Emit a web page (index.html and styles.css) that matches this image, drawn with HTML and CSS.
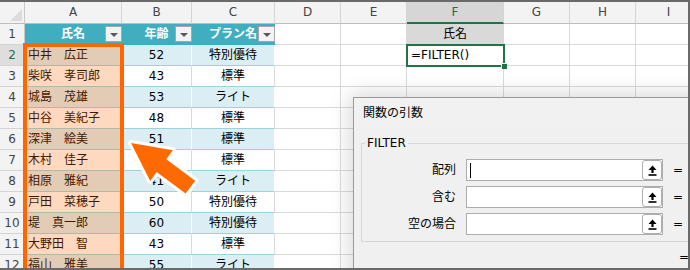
FILE: index.html
```html
<!DOCTYPE html>
<html lang="ja">
<head>
<meta charset="utf-8">
<link rel="stylesheet" href="styles.css">
</head>
<body>
<div class="frame">
  <div class="sheet">
    <div class="corner"><span class="tri"></span></div>
    <div class="ch">A</div><div class="ch">B</div><div class="ch">C</div><div class="ch">D</div><div class="ch">E</div><div class="ch sel">F</div><div class="ch">G</div><div class="ch">H</div><div class="ch">I</div>

    <div class="rh">1</div>
    <div class="c th">氏名<span class="fbtn"></span></div>
    <div class="c th">年齢<span class="fbtn"></span></div>
    <div class="c th">プラン名<span class="fbtn"></span></div>
    <div class="c"></div><div class="c"></div>
    <div class="c gray ctr">氏名</div>
    <div class="c"></div><div class="c"></div><div class="c"></div>

    <div class="rh act">2</div>
    <div class="c tb">中井　広正</div><div class="c tb ctr">52</div><div class="c tb ctr">特別優待</div>
    <div class="c"></div><div class="c"></div>
    <div class="c active">=FILTER()<span class="handle"></span></div>
    <div class="c"></div><div class="c"></div><div class="c"></div>

    <div class="rh">3</div>
    <div class="c tw">柴咲　孝司郎</div><div class="c tw ctr">43</div><div class="c tw ctr">標準</div>
    <div class="c"></div><div class="c"></div><div class="c"></div><div class="c"></div><div class="c"></div><div class="c"></div>

    <div class="rh">4</div>
    <div class="c tb">城島　茂雄</div><div class="c tb ctr">53</div><div class="c tb ctr">ライト</div>
    <div class="c"></div><div class="c"></div><div class="c"></div><div class="c"></div><div class="c"></div><div class="c"></div>

    <div class="rh">5</div>
    <div class="c tw">中谷　美紀子</div><div class="c tw ctr">48</div><div class="c tw ctr">標準</div>
    <div class="c"></div><div class="c"></div><div class="c"></div><div class="c"></div><div class="c"></div><div class="c"></div>

    <div class="rh">6</div>
    <div class="c tb">深津　絵美</div><div class="c tb ctr">51</div><div class="c tb ctr">標準</div>
    <div class="c"></div><div class="c"></div><div class="c"></div><div class="c"></div><div class="c"></div><div class="c"></div>

    <div class="rh">7</div>
    <div class="c tw">木村　佳子</div><div class="c tw ctr">35</div><div class="c tw ctr">標準</div>
    <div class="c"></div><div class="c"></div><div class="c"></div><div class="c"></div><div class="c"></div><div class="c"></div>

    <div class="rh">8</div>
    <div class="c tb">相原　雅紀</div><div class="c tb ctr">41</div><div class="c tb ctr">ライト</div>
    <div class="c"></div><div class="c"></div><div class="c"></div><div class="c"></div><div class="c"></div><div class="c"></div>

    <div class="rh">9</div>
    <div class="c tw">戸田　菜穂子</div><div class="c tw ctr">50</div><div class="c tw ctr">特別優待</div>
    <div class="c"></div><div class="c"></div><div class="c"></div><div class="c"></div><div class="c"></div><div class="c"></div>

    <div class="rh">10</div>
    <div class="c tb">堤　真一郎</div><div class="c tb ctr">60</div><div class="c tb ctr">特別優待</div>
    <div class="c"></div><div class="c"></div><div class="c"></div><div class="c"></div><div class="c"></div><div class="c"></div>

    <div class="rh">11</div>
    <div class="c tw">大野田　智</div><div class="c tw ctr">43</div><div class="c tw ctr">標準</div>
    <div class="c"></div><div class="c"></div><div class="c"></div><div class="c"></div><div class="c"></div><div class="c"></div>

    <div class="rh">12</div>
    <div class="c tb">福山　雅美</div><div class="c tb ctr">55</div><div class="c tb ctr">ライト</div>
    <div class="c"></div><div class="c"></div><div class="c"></div><div class="c"></div><div class="c"></div><div class="c"></div>
  </div>

  <div class="highlight"></div>

  <svg class="arrow" width="100" height="80" viewBox="120 128 100 80">
    <polygon points="131,143 172.8,150.3 166.3,159.2 195.2,180.7 185.6,193.5 156.7,172 150.2,180.9" fill="#ff6a00" stroke="#ffffff" stroke-width="6" stroke-linejoin="round" paint-order="stroke fill"/>
  </svg>

  <div class="dialog">
    <div class="dlg-title">関数の引数</div>
    <div class="dlg-body">
      <div class="group">
        <div class="group-title">FILTER</div>
        <div class="args">
          <div class="lbl">配列</div>
          <div class="field"><span class="caret"></span><span class="pick"><svg width="9" height="11" viewBox="0 0 9 11"><path d="M4.5 0.5 L8.5 5 L5.6 5 L5.6 8 L3.4 8 L3.4 5 L0.5 5 Z" fill="#000"/><rect x="0.5" y="9.2" width="8" height="1.6" fill="#000"/></svg></span></div>
          <div class="eq">=</div>

          <div class="lbl">含む</div>
          <div class="field"><span></span><span class="pick"><svg width="9" height="11" viewBox="0 0 9 11"><path d="M4.5 0.5 L8.5 5 L5.6 5 L5.6 8 L3.4 8 L3.4 5 L0.5 5 Z" fill="#000"/><rect x="0.5" y="9.2" width="8" height="1.6" fill="#000"/></svg></span></div>
          <div class="eq">=</div>

          <div class="lbl">空の場合</div>
          <div class="field"><span></span><span class="pick"><svg width="9" height="11" viewBox="0 0 9 11"><path d="M4.5 0.5 L8.5 5 L5.6 5 L5.6 8 L3.4 8 L3.4 5 L0.5 5 Z" fill="#000"/><rect x="0.5" y="9.2" width="8" height="1.6" fill="#000"/></svg></span></div>
          <div class="eq">=</div>
        </div>
      </div>
      <div class="result"><span class="eq">=</span></div>
    </div>
  </div>
</div>
</body>
</html>
```

FILE: styles.css
```css
html, body {
  margin: 0;
  padding: 0;
  background: #fff;
}

.frame {
  position: relative;
  width: 690px;
  height: 270px;
  box-sizing: border-box;
  border-top: 2px solid #6a6a6a;
  border-right: 2px solid #6a6a6a;
  border-bottom: 2px solid #6a6a6a;
  overflow: hidden;
  background: #fff;
}

.sheet {
  display: grid;
  grid-template-columns: 25px 97px 70px 83px 66px 66px 97px 66px 66px 66px;
  grid-template-rows: 22px;
  grid-auto-rows: 21px;
  font-family: "DejaVu Sans", "Noto Sans CJK JP", sans-serif;
  font-size: 12px;
  color: #000;
}

.sheet > div {
  box-sizing: border-box;
  border-right: 1px solid #dadada;
  border-bottom: 1px solid #dadada;
  line-height: 20px;
  white-space: nowrap;
  overflow: hidden;
  padding: 0 3px;
}

.sheet > .corner {
  background: #f3f3f3;
  border-right-color: #c9c9c9;
  border-bottom-color: #bdbdbd;
  display: flex;
  align-items: flex-end;
  justify-content: flex-end;
  padding: 0 2px 2px 0;
}

.tri {
  width: 0;
  height: 0;
  border-left: 12px solid transparent;
  border-bottom: 12px solid #dcdcdc;
}

.sheet > .ch {
  background: #f3f3f3;
  color: #444;
  text-align: center;
  border-right-color: #d4d4d4;
  border-bottom-color: #bdbdbd;
  line-height: 21px;
}

.sheet > .ch.sel {
  background: #d6d6d6;
  color: #217346;
  border-bottom: 2px solid #217346;
}

.sheet > .rh {
  background: #f3f3f3;
  color: #444;
  text-align: center;
  padding: 0;
  border-right-color: #c9c9c9;
  border-bottom-color: #d4d4d4;
}

.sheet > .rh.act {
  background: #dedede;
  color: #217346;
}

.sheet > .th {
  position: relative;
  background: #41aebf;
  color: #fff;
  font-weight: bold;
  text-align: center;
  border-right-color: #41aebf;
  border-bottom-color: #41aebf;
  overflow: visible;
}

.fbtn {
  position: absolute;
  right: -1px;
  top: 2px;
  width: 17px;
  height: 16px;
  box-sizing: border-box;
  border: 1px solid #a6a6a6;
  background: #f3f3f3;
  display: flex;
  align-items: center;
  justify-content: center;
}

.fbtn::after {
  content: "";
  width: 0;
  height: 0;
  border-left: 4px solid transparent;
  border-right: 4px solid transparent;
  border-top: 4px solid #5a5a5a;
  margin-top: 1px;
}

.sheet > .tb {
  background: #daeef3;
  border-right-color: #ffffff;
  border-bottom-color: #9ad2de;
}

.sheet > .tw {
  background: #ffffff;
  border-bottom-color: #9ad2de;
}

.sheet > .ctr {
  text-align: center;
}

.sheet > .gray {
  background: #d9d9d9;
}

.sheet > .active {
  position: relative;
  overflow: visible;
  outline: 2px solid #217346;
  outline-offset: -1px;
  z-index: 2;
  padding-left: 4px;
}

.handle {
  position: absolute;
  right: -4px;
  bottom: -4px;
  width: 5px;
  height: 5px;
  background: #217346;
  border-left: 1px solid #fff;
  border-top: 1px solid #fff;
}

.highlight {
  position: absolute;
  left: 23px;
  top: 41px;
  width: 101px;
  height: 260px;
  box-sizing: border-box;
  border: 4px solid #ff6600;
  background: rgba(255, 102, 0, 0.25);
  z-index: 3;
}

.arrow {
  position: absolute;
  left: 120px;
  top: 126px;
  z-index: 4;
}

.dialog {
  position: absolute;
  left: 353px;
  top: 95px;
  width: 400px;
  height: 220px;
  box-sizing: border-box;
  border: 1px solid #9a9a9a;
  background: #f0f0f0;
  box-shadow: 0 0 20px 3px rgba(0, 0, 0, 0.16);
  z-index: 5;
  font-family: "DejaVu Sans", "Noto Sans CJK JP", sans-serif;
  font-size: 12px;
  color: #000;
}

.dlg-title {
  height: 30px;
  line-height: 30px;
  padding-left: 9px;
  background: #f1f1f1;
}

.dlg-body {
  padding: 15px 6px 0 7px;
}

.group {
  border: 1px solid #d8d8d8;
  padding: 0 0 6px 0;
}

.group-title {
  width: fit-content;
  margin: -9px 0 0 3px;
  padding: 0 2px;
  line-height: 16px;
  background: #f0f0f0;
}

.args {
  margin-top: 8px;
  display: grid;
  grid-template-columns: 94px 197px 20px;
  grid-auto-rows: 22px;
  column-gap: 10px;
  row-gap: 5px;
  align-items: center;
}

.args .lbl {
  text-align: right;
  line-height: 22px;
}

.field {
  height: 22px;
  box-sizing: border-box;
  border: 1px solid #adadad;
  background: #fff;
  display: flex;
  align-items: center;
  justify-content: space-between;
}

.caret {
  width: 1px;
  height: 15px;
  background: #000;
  margin-left: 3px;
}

.pick {
  width: 20px;
  height: 20px;
  box-sizing: border-box;
  border: 1px solid #adadad;
  border-radius: 3px;
  background: #fff;
  display: flex;
  align-items: center;
  justify-content: center;
}

.pick svg {
  display: block;
}

.eq {
  line-height: 22px;
  padding-left: 0;
}

.result {
  padding-left: 318px;
  margin-top: 4px;
  line-height: 22px;
}
```
